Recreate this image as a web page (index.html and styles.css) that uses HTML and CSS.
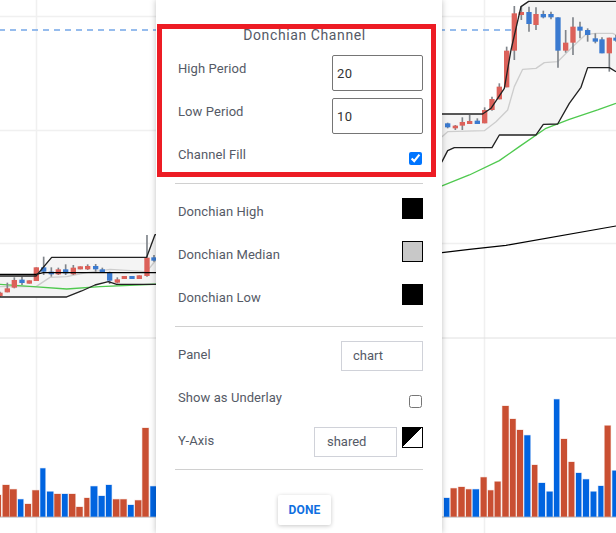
FILE: index.html
```html
<!DOCTYPE html>
<html lang="en">
<head>
    <meta charset="UTF-8">
    <meta name="viewport" content="width=device-width, initial-scale=1.0">
    <title>Donchian Channel</title>
    <link rel="stylesheet" href="styles.css">
</head>
<body>

<svg class="chart" width="616" height="533" viewBox="0 0 616 533">
    <g class="grid">
        <line x1="0" y1="16.5" x2="616" y2="16.5"/>
        <line x1="0" y1="130.5" x2="616" y2="130.5"/>
        <line x1="0" y1="243.5" x2="616" y2="243.5"/>
        <line x1="36.5" y1="0" x2="36.5" y2="533"/>
        <line x1="484.5" y1="0" x2="484.5" y2="533"/>
    </g>
    <line class="panel-line" x1="0" y1="338" x2="616" y2="338"/>
    <line class="baseline" x1="0" y1="517" x2="616" y2="517"/>
    <line class="price-line" x1="0" y1="30" x2="616" y2="30"/>

    <g id="volumeLeft" transform="translate(0 400) scale(.3333)"></g>
    <g id="volumeRight" transform="translate(436 390) scale(.3333)"></g>

    <g id="priceLeft" transform="translate(0 220) scale(.3333)">
        <polygon class="channel" points="0,168 108,168 155,112 440,112 465,44 480,44 480,193 350,193 325,185 285,195 245,213 200,231 0,231"/>
        <polyline class="median" points="0,200 108,200 150,172 200,170 260,158 330,148 440,155 468,120 480,118"/>
        <polyline class="green" points="0,193 100,200 200,207 300,200 480,192"/>
        <g class="candles"></g>
        <polyline class="sma" points="0,163 108,163 130,158 480,158"/>
        <polyline class="donchian" points="0,168 108,168 155,112 440,112 465,44 480,44"/>
        <polyline class="donchian" points="0,231 200,231 245,213 285,195 325,185 350,193 480,193"/>
    </g>

    <g id="priceRight" transform="translate(436 0) scale(.3333)">
        <polygon class="channel" points="0,342 140,342 165,325 205,265 225,150 255,20 278,4 540,4 540,215 520,203 455,203 435,262 400,310 365,372 322,373 300,405 190,405 168,443 55,443 35,452 18,485 0,500"/>
        <polyline class="median" points="0,420 18,410 35,395 145,392 180,365 215,330 235,260 260,208 300,205 325,188 365,185 410,140 450,103 480,100 530,100 540,105"/>
        <polyline class="green" points="0,565 18,558 100,525 190,482 250,440 330,385 400,358 485,330 540,310"/>
        <polyline class="sma" points="0,760 18,758 100,748 210,736 540,678"/>
        <g class="candles"></g>
        <polyline class="donchian" points="0,342 140,342 165,325 205,265 225,150 255,20 278,4 540,4"/>
        <polyline class="donchian" points="0,500 18,485 35,452 55,443 168,443 190,405 300,405 322,373 365,372 400,310 435,262 455,203 520,203 540,215"/>
    </g>
</svg>

<div class="dialog">
    <div class="title">Donchian Channel</div>

    <div class="section first">
        <div class="row">
            <label>High Period</label>
            <input type="text" class="num" value="20">
        </div>
        <div class="row">
            <label>Low Period</label>
            <input type="text" class="num" value="10">
        </div>
        <div class="row">
            <label>Channel Fill</label>
            <input type="checkbox" checked>
        </div>
    </div>

    <div class="section">
        <div class="row">
            <label>Donchian High</label>
            <div class="swatch black"></div>
        </div>
        <div class="row">
            <label>Donchian Median</label>
            <div class="swatch grey"></div>
        </div>
        <div class="row">
            <label>Donchian Low</label>
            <div class="swatch black"></div>
        </div>
    </div>

    <div class="section">
        <div class="row">
            <label>Panel</label>
            <input type="text" class="select panel-select" value="chart">
        </div>
        <div class="row">
            <label>Show as Underlay</label>
            <input type="checkbox">
        </div>
        <div class="row">
            <label>Y-Axis</label>
            <div class="axis-controls">
                <input type="text" class="select axis-select" value="shared">
                <div class="swatch split"></div>
            </div>
        </div>
    </div>

    <div class="actions">
        <button>DONE</button>
    </div>
</div>

<div class="highlight"></div>

<script src="chart.js"></script>
</body>
</html>
```

FILE: styles.css
```css
html, body {
    margin: 0;
    height: 100%;
}
body {
    position: relative;
    width: 616px;
    height: 533px;
    overflow: hidden;
    background: white;
    font-family: Roboto, Arial, sans-serif;
}
.chart {
    display: block;
    filter: blur(0.5px);
}
.grid line {
    stroke: #f0f0f0;
    stroke-width: 1.5;
}
.panel-line {
    stroke: #e0e0e0;
    stroke-width: 1;
}
.baseline {
    stroke: #cfcfcf;
    stroke-width: 1.5;
}
.price-line {
    stroke: #74a6e8;
    stroke-width: 1.5;
    stroke-dasharray: 6 5;
    stroke-dashoffset: 1;
}
.channel {
    fill: #f4f4f4;
}
polyline {
    fill: none;
    stroke-linejoin: round;
}
.median {
    stroke: #cdcdcd;
    stroke-width: 4;
}
.green {
    stroke: #4fc94f;
    stroke-width: 4;
}
.sma {
    stroke: #000;
    stroke-width: 3.5;
}
.donchian {
    stroke: #222;
    stroke-width: 4;
}
.wick {
    stroke: #80858b;
    stroke-width: 5;
}
.candle-up {
    fill: #dc615a;
}
.candle-down {
    fill: #3a7ad0;
}
.bar-up {
    fill: #c94f32;
    stroke: rgba(201, 79, 50, 0.25);
    stroke-width: 3;
}
.bar-down {
    fill: #0064e0;
    stroke: rgba(0, 100, 224, 0.25);
    stroke-width: 3;
}

.dialog {
    position: absolute;
    top: 0;
    left: 156px;
    width: 248px;
    height: 509px;
    padding: 24px 19px 0;
    background: white;
    box-shadow: 0 0 6px rgba(0, 0, 0, 0.25);
    color: #555a66;
    font-size: 13px;
    letter-spacing: 0.08px;
}
.title {
    height: 22px;
    margin-bottom: 9px;
    padding-left: 11px;
    line-height: 22px;
    font-size: 14px;
    letter-spacing: 0.6px;
    text-align: center;
}
.section {
    padding-top: 14px;
    border-bottom: 1px solid #d0d0d0;
}
.section.first {
    padding-top: 0;
}
.row {
    display: flex;
    justify-content: space-between;
    align-items: flex-start;
    height: 43px;
}
.row:last-child {
    height: 42px;
}
label {
    margin: 5px 0 0 3px;
    line-height: 18px;
}
input[type="text"] {
    box-sizing: border-box;
    margin: 0;
    font-family: inherit;
    font-size: 13px;
    outline: none;
}
.num {
    width: 91px;
    height: 36px;
    padding: 0 4px;
    border: 1px solid #757575;
    border-radius: 2px;
    color: #333;
    letter-spacing: 0.4px;
}
.select {
    height: 30px;
    padding-bottom: 2px;
    border: 1px solid #d0d2d9;
    color: #555a66;
    letter-spacing: 0;
}
.panel-select {
    width: 82px;
    padding-left: 11px;
    padding-right: 11px;
}
.axis-select {
    width: 83px;
    padding-left: 12px;
    padding-right: 12px;
}
input[type="checkbox"] {
    width: 13px;
    height: 13px;
    margin: 11px 1px 0 0;
}
.swatch {
    box-sizing: border-box;
    width: 21px;
    height: 21px;
    border: 1px solid black;
}
.swatch.black {
    background: black;
}
.swatch.grey {
    background: #c8c8c8;
}
.swatch.split {
    background: linear-gradient(to bottom right, black 50%, white 50%);
}
.axis-controls {
    display: flex;
    gap: 5px;
}
.actions {
    display: flex;
    justify-content: center;
    padding: 25px 0 0 11px;
}
button {
    width: 53px;
    height: 30px;
    padding: 0;
    border: none;
    border-radius: 2px;
    background: white;
    box-shadow: 0 1px 4px rgba(0, 0, 0, 0.22);
    color: #0f6fe0;
    font-family: inherit;
    font-size: 12px;
    font-weight: 700;
    letter-spacing: 0.2px;
    cursor: pointer;
}
.highlight {
    position: absolute;
    top: 24px;
    left: 157px;
    width: 269px;
    height: 143px;
    border: 5px solid #ed1c24;
}
```

FILE: chart.js
```js
// candles: x, wick top, wick bottom, body top, body bottom, u(p) or d(own)
let candlesLeft = [
    [0, 215, 230, 218, 228, 'u'], [22, 188, 217, 205, 217, 'u'], [43, 172, 205, 180, 203, 'u'],
    [66, 170, 195, 179, 189, 'd'], [88, 181, 191, 181, 191, 'u'], [109, 142, 183, 142, 183, 'u'],
    [131, 110, 165, 142, 155, 'd'], [154, 142, 170, 155, 163, 'd'], [175, 143, 165, 148, 163, 'u'],
    [197, 133, 165, 148, 160, 'd'], [220, 135, 165, 143, 163, 'u'], [241, 139, 148, 139, 148, 'u'],
    [263, 133, 150, 138, 148, 'u'], [287, 132, 155, 138, 148, 'd'], [307, 143, 158, 148, 156, 'd'],
    [329, 155, 192, 158, 182, 'd'], [352, 172, 190, 178, 188, 'u'], [373, 168, 177, 168, 177, 'u'],
    [396, 168, 177, 168, 177, 'd'], [418, 166, 177, 166, 177, 'u'], [441, 45, 170, 113, 168, 'u'],
    [462, 105, 125, 112, 122, 'd']
];
let candlesRight = [
    [35, 368, 385, 370, 382, 'd'], [58, 375, 390, 377, 385, 'u'], [79, 352, 390, 366, 377, 'u'],
    [101, 345, 372, 363, 372, 'u'], [124, 355, 372, 362, 372, 'd'], [146, 322, 370, 330, 370, 'u'],
    [168, 290, 332, 297, 330, 'u'], [190, 250, 298, 260, 298, 'u'], [212, 140, 262, 152, 262, 'u'],
    [235, 18, 180, 40, 152, 'u'], [256, 18, 60, 36, 45, 'u'], [279, 20, 95, 36, 72, 'd'],
    [300, 22, 90, 42, 75, 'u'], [322, 32, 55, 42, 52, 'd'], [345, 35, 58, 42, 52, 'd'],
    [366, 52, 203, 52, 152, 'd'], [389, 90, 158, 128, 152, 'u'], [411, 52, 165, 80, 128, 'u'],
    [432, 65, 115, 80, 92, 'd'], [455, 85, 125, 90, 105, 'd'], [478, 100, 130, 115, 125, 'd'],
    [498, 112, 160, 118, 160, 'd'], [520, 113, 215, 113, 160, 'u'], [540, 105, 125, 113, 122, 'd']
];

// volume bars: left, right, top, colour
let barsLeft = [
    [-15, 3, 285, 'u'], [8, 28, 255, 'u'], [30, 50, 268, 'u'], [54, 70, 298, 'd'], [75, 93, 312, 'u'],
    [97, 117, 271, 'u'], [121, 136, 205, 'd'], [141, 160, 275, 'd'], [163, 182, 282, 'u'],
    [186, 203, 282, 'd'], [207, 226, 282, 'u'], [229, 248, 321, 'u'], [253, 268, 294, 'u'],
    [272, 292, 259, 'd'], [296, 314, 288, 'd'], [318, 335, 255, 'd'], [339, 358, 298, 'u'],
    [361, 380, 298, 'u'], [384, 401, 315, 'd'], [405, 424, 301, 'u'], [427, 446, 84, 'u'],
    [451, 468, 259, 'd']
];
let barsRight = [
    [24, 40, 324, 'd'], [44, 62, 295, 'u'], [67, 86, 291, 'u'], [90, 106, 298, 'u'], [110, 129, 298, 'd'],
    [134, 152, 262, 'u'], [156, 172, 301, 'u'], [176, 194, 275, 'u'], [199, 218, 48, 'u'],
    [222, 239, 87, 'u'], [243, 261, 120, 'u'], [265, 283, 136, 'd'], [288, 304, 225, 'u'],
    [308, 327, 279, 'd'], [332, 350, 305, 'd'], [354, 370, 28, 'd'], [375, 393, 147, 'u'],
    [398, 415, 216, 'u'], [420, 436, 249, 'd'], [441, 459, 268, 'd'], [464, 481, 305, 'd'],
    [487, 502, 288, 'd'], [506, 524, 107, 'u'], [529, 548, 242, 'd']
];

function add(parent, tag, attrs) {
    let el = document.createElementNS('http://www.w3.org/2000/svg', tag);
    for (let key in attrs) {
        el.setAttribute(key, attrs[key]);
    }
    parent.appendChild(el);
}

function drawCandles(parent, candles) {
    candles.forEach(function (c) {
        add(parent, 'line', { class: 'wick', x1: c[0], x2: c[0], y1: c[1], y2: c[2] });
        add(parent, 'rect', {
            class: c[5] === 'u' ? 'candle-up' : 'candle-down',
            x: c[0] - 8, y: c[3], width: 16, height: c[4] - c[3]
        });
    });
}

function drawBars(parent, bars, baseline) {
    bars.forEach(function (b) {
        add(parent, 'rect', {
            class: b[3] === 'u' ? 'bar-up' : 'bar-down',
            x: b[0], y: b[2], width: b[1] - b[0], height: baseline - b[2]
        });
    });
}

drawCandles(document.querySelector('#priceLeft .candles'), candlesLeft);
drawCandles(document.querySelector('#priceRight .candles'), candlesRight);
drawBars(document.getElementById('volumeLeft'), barsLeft, 350);
drawBars(document.getElementById('volumeRight'), barsRight, 380);
```
